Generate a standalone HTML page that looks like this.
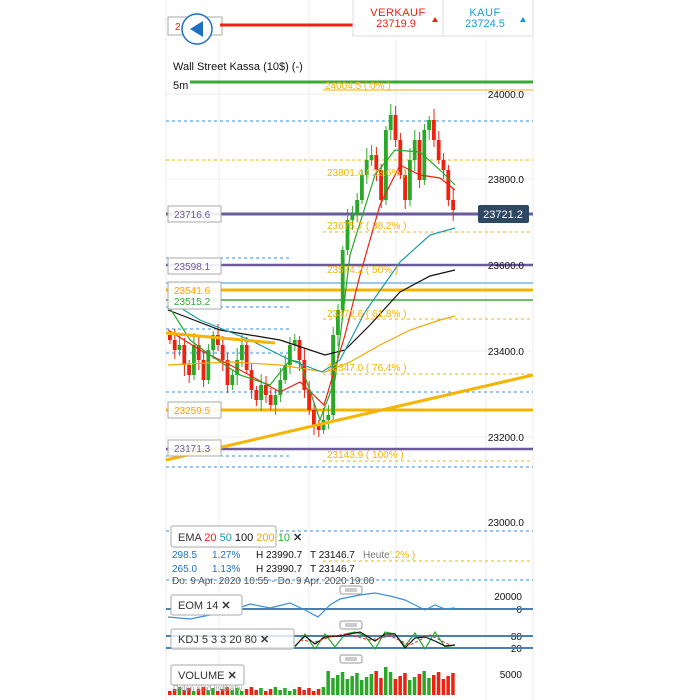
<!DOCTYPE html>
<html><head><meta charset="utf-8"><style>
body{margin:0;width:700px;height:700px;background:#fff;overflow:hidden;font-family:"Liberation Sans",sans-serif}
svg{position:absolute;left:0;top:0}
</style></head><body>
<svg id="s" width="700" height="700" viewBox="0 0 700 700" font-family="Liberation Sans, sans-serif">
<g stroke="#ececec" stroke-width="1">
<line x1="166" y1="0" x2="166" y2="700"/><line x1="533" y1="0" x2="533" y2="700"/>
<line x1="219" y1="40" x2="219" y2="700"/><line x1="309" y1="0" x2="309" y2="700"/><line x1="396" y1="40" x2="396" y2="700"/><line x1="486" y1="40" x2="486" y2="700"/>
<line x1="166" y1="94" x2="533" y2="94"/><line x1="166" y1="179" x2="533" y2="179"/><line x1="166" y1="351" x2="533" y2="351"/><line x1="166" y1="437" x2="533" y2="437"/>
</g>
<g stroke="#3a8fd8" stroke-width="1" stroke-dasharray="3,3">
<line x1="166" y1="121" x2="533" y2="121"/><line x1="166" y1="467" x2="533" y2="467"/>
<line x1="166" y1="258" x2="290" y2="258"/><line x1="166" y1="307" x2="290" y2="307"/><line x1="166" y1="329" x2="290" y2="329"/><line x1="166" y1="353" x2="290" y2="353"/><line x1="166" y1="392" x2="533" y2="392"/><line x1="166" y1="456" x2="290" y2="456"/>
<line x1="166" y1="531" x2="533" y2="531"/><line x1="166" y1="580" x2="533" y2="580"/>
</g>
<g stroke="#f5b400" stroke-width="1" stroke-dasharray="3,3">
<line x1="166" y1="160" x2="533" y2="160"/><line x1="323" y1="232" x2="533" y2="232"/><line x1="323" y1="319" x2="533" y2="319"/><line x1="323" y1="374" x2="533" y2="374"/><line x1="323" y1="461" x2="533" y2="461"/><line x1="323" y1="561" x2="533" y2="561"/>
</g>
<line x1="323" y1="90" x2="533" y2="90" stroke="#f7c860" stroke-width="1.5"/>
<line x1="190" y1="82" x2="533" y2="82" stroke="#3aa93a" stroke-width="3"/>
<line x1="166" y1="214" x2="533" y2="214" stroke="#6c5a9e" stroke-width="3"/>
<line x1="166" y1="265" x2="533" y2="265" stroke="#6c5a9e" stroke-width="2.5"/>
<line x1="166" y1="449" x2="533" y2="449" stroke="#6c5a9e" stroke-width="2.5"/>
<line x1="166" y1="283" x2="533" y2="283" stroke="#9cc8ec" stroke-width="2"/>
<line x1="166" y1="290" x2="533" y2="290" stroke="#f5b400" stroke-width="3"/>
<line x1="166" y1="300" x2="533" y2="300" stroke="#3aa93a" stroke-width="1.5"/>
<line x1="166" y1="410" x2="533" y2="410" stroke="#f5b400" stroke-width="3"/>
<g id="candles"></g>
<g fill="none" stroke-width="1.2">
<polyline stroke="#f5a800" points="168,365 230,362 280,365 325,372 350,362 380,345 410,330 440,320 455,316"/>
<polyline stroke="#111" points="168,310 220,330 280,340 325,355 345,350 370,325 400,292 430,276 455,270"/>
<polyline stroke="#1a9aa8" points="168,300 200,320 250,340 290,360 322,372 340,360 365,312 400,262 430,235 455,228"/>
<polyline stroke="#e21" points="168,330 200,350 240,370 280,392 300,382 324,405 345,335 360,275 380,205 400,165 420,175 440,178 455,190"/>
<polyline stroke="#2aa82a" points="168,305 190,340 210,355 240,375 270,385 290,360 300,362 320,420 335,380 350,255 375,175 395,150 420,152 440,170 455,185"/>
</g>
<line x1="166" y1="460" x2="533" y2="375" stroke="#f5b400" stroke-width="3"/>
<line x1="166" y1="333" x2="275" y2="343" stroke="#f5b400" stroke-width="3"/>
<g font-size="10" fill="#f5b400">
<text x="325" y="89">24004.5 ( 0% )</text><text x="327" y="176">23801.4 ( 23.6% )</text><text x="327" y="229">23675.7 ( 38.2% )</text><text x="327" y="273">23574.2 ( 50% )</text><text x="327" y="317">23472.6 ( 61.8% )</text><text x="327" y="371">23347.0 ( 76.4% )</text><text x="327" y="458">23143.9 ( 100% )</text>
</g>
<g font-size="10" fill="#111" text-anchor="end">
<text x="524" y="98">24000.0</text><text x="524" y="183">23800.0</text><text x="524" y="269">23600.0</text><text x="524" y="355">23400.0</text><text x="524" y="441">23200.0</text><text x="524" y="526">23000.0</text>
<text x="522" y="600">20000</text><text x="522" y="613">0</text><text x="522" y="640">80</text><text x="522" y="652">20</text><text x="522" y="678">5000</text>
</g>
<rect x="478" y="205" width="51" height="18" rx="2" fill="#2e4763"/>
<text x="503" y="218" font-size="11" fill="#fff" text-anchor="middle">23721.2</text>
<g stroke="#aaa" fill="#fff" fill-opacity="0.9">
<rect x="168" y="206" width="53" height="16"/><rect x="168" y="258" width="53" height="16"/><rect x="168" y="282" width="53" height="27"/><rect x="168" y="402" width="53" height="16"/><rect x="168" y="440" width="53" height="16"/>
</g>
<g font-size="10">
<text x="174" y="218" fill="#6c5a9e">23716.6</text><text x="174" y="270" fill="#6c5a9e">23598.1</text><text x="174" y="294" fill="#f5a800">23541.6</text><text x="174" y="305" fill="#3aa93a">23515.2</text><text x="174" y="414" fill="#f5a800">23259.5</text><text x="174" y="452" fill="#6c5a9e">23171.3</text>
</g>
<!-- top -->
<rect x="168" y="17" width="54" height="18" fill="#fff" stroke="#aaa"/>
<text x="175" y="30" font-size="10" fill="#e21">2</text>
<line x1="220" y1="25" x2="355" y2="25" stroke="#e21" stroke-width="3"/>
<circle cx="197" cy="29" r="15" fill="#fff" stroke="#1f6fc5" stroke-width="1.5"/>
<polygon points="190,29 203,21 203,37" fill="#1f6fc5"/>
<rect x="353" y="-1" width="180" height="37" fill="#fff" stroke="#ddd"/>
<line x1="443" y1="0" x2="443" y2="36" stroke="#ddd"/>
<text x="398" y="16" font-size="11" fill="#e21" text-anchor="middle" letter-spacing="0.5">VERKAUF</text>
<text x="396" y="27" font-size="11" fill="#e21" text-anchor="middle">23719.9</text>
<polygon points="432,22 435,17 438,22" fill="#e21"/>
<text x="485" y="16" font-size="11" fill="#1a9ad8" text-anchor="middle" letter-spacing="0.5">KAUF</text>
<text x="485" y="27" font-size="11" fill="#1a9ad8" text-anchor="middle">23724.5</text>
<polygon points="520,22 523,17 526,22" fill="#1a9ad8"/>
<text x="173" y="70" font-size="11" fill="#111">Wall Street Kassa (10$) (-)</text>
<text x="173" y="89" font-size="11" fill="#111">5m</text>
<!-- indicators -->
<rect x="171" y="526" width="105" height="21" rx="2" fill="#fff" stroke="#aaa"/>
<text x="178" y="541" font-size="11"><tspan fill="#333">EMA </tspan><tspan fill="#e21">20 </tspan><tspan fill="#1a9aa8">50 </tspan><tspan fill="#111">100 </tspan><tspan fill="#f5a800">200 </tspan><tspan fill="#2aa82a">10 </tspan><tspan fill="#333" font-weight="bold">✕</tspan></text>
<g font-size="10">
<text x="172" y="558" fill="#1f6fc5">298.5</text><text x="212" y="558" fill="#1f6fc5">1.27%</text><text x="256" y="558" fill="#111">H 23990.7</text><text x="310" y="558" fill="#111">T 23146.7</text><text x="363" y="558" fill="#777">Heute</text><text x="390" y="558" fill="#f5b400">'.2% )</text>
<text x="172" y="572" fill="#1f6fc5">265.0</text><text x="212" y="572" fill="#1f6fc5">1.13%</text><text x="256" y="572" fill="#111">H 23990.7</text><text x="310" y="572" fill="#111">T 23146.7</text>
<text x="172" y="584" fill="#555">Do. 9 Apr. 2020 10:55 - Do. 9 Apr. 2020 19:00</text>
</g>
<g fill="#fff" stroke="#999"><rect x="340" y="586" width="22" height="8" rx="2"/><rect x="340" y="621" width="22" height="8" rx="2"/><rect x="340" y="655" width="22" height="8" rx="2"/></g>
<g stroke="#999"><line x1="345" y1="589" x2="357" y2="589"/><line x1="345" y1="591" x2="357" y2="591"/><line x1="345" y1="624" x2="357" y2="624"/><line x1="345" y1="626" x2="357" y2="626"/><line x1="345" y1="658" x2="357" y2="658"/><line x1="345" y1="660" x2="357" y2="660"/></g>
<line x1="166" y1="609" x2="533" y2="609" stroke="#4a7fb0" stroke-width="2"/>
<polyline fill="none" stroke="#3a8fd8" stroke-width="1.2" points="168,617 190,619 210,615 230,611 250,604 270,608 290,603 305,610 318,617 330,605 340,599 360,595 375,593 390,596 405,600 415,605 425,610 435,605 445,609 455,608"/>
<line x1="166" y1="636" x2="533" y2="636" stroke="#4a7fb0" stroke-width="2"/>
<line x1="166" y1="648" x2="533" y2="648" stroke="#4a7fb0" stroke-width="2"/>
<polyline fill="none" stroke="#2aa82a" stroke-width="1.2" points="295,647 305,634 315,649 325,634 335,647 345,634 355,632 365,636 375,649 385,632 395,634 405,646 415,633 425,649 435,632 445,647 455,645"/>
<polyline fill="none" stroke="#111" stroke-width="1.2" points="295,646 305,636 315,644 325,637 340,636 360,632 375,641 385,634 395,634 405,648 415,638 425,637 435,641 445,646 455,645"/>
<polyline fill="none" stroke="#e21" stroke-width="1" stroke-dasharray="3,2" points="300,640 315,642 330,637 345,634 370,640 390,636 410,645 430,635 450,645"/>
<rect x="171" y="595" width="71" height="20" rx="2" fill="#fff" stroke="#aaa"/>
<text x="178" y="609" font-size="11" fill="#333">EOM  14 <tspan font-weight="bold">✕</tspan></text>
<rect x="171" y="629" width="123" height="20" rx="2" fill="#fff" fill-opacity="0.8" stroke="#aaa"/>
<text x="178" y="643" font-size="11" fill="#333">KDJ  5  3  3  20  80 <tspan font-weight="bold">✕</tspan></text>
<g id="vol"></g>
<rect x="171" y="665" width="73" height="20" rx="2" fill="#fff" stroke="#aaa"/>
<text x="178" y="679" font-size="11" fill="#333">VOLUME <tspan font-weight="bold">✕</tspan></text>
<text x="173" y="691" font-size="8" fill="#999">Daten sind indikativ</text>
</svg>
<script>
var c=[340,350,345,365,375,345,360,380,350,335,345,360,385,375,360,345,370,390,400,385,395,405,395,380,365,345,340,360,390,410,425,430,420,415,335,310,250,220,215,200,175,160,155,170,200,130,115,140,175,200,160,140,180,130,120,140,160,170,200,210];
var g=document.getElementById('candles'),v=document.getElementById('vol'),h='',vh='',ns='http://www.w3.org/2000/svg';
var prev=335;
for(var i=0;i<c.length;i++){var x=168+i*4.8,o=prev,cl=c[i];var up=cl<o;if(Math.abs(cl-o)<4){o=cl+((i%2)?6:-6);up=cl<o;}
var col=up?'#2aa82a':'#e21';var t=Math.min(o,cl),b=Math.max(o,cl);var w1=t-4-(i*7%9),w2=b+4+(i*5%8);
h+='<line x1="'+(x+2)+'" y1="'+w1+'" x2="'+(x+2)+'" y2="'+w2+'" stroke="'+col+'" stroke-width="1"/><rect x="'+x+'" y="'+t+'" width="3.8" height="'+(b-t)+'" fill="'+col+'"/>';
var vv=(i>=33&&i<60)?15+(i*13%10):4+(i*7%5);if(i==45)vv=28;
vh+='<rect x="'+x+'" y="'+(695-vv)+'" width="3.5" height="'+vv+'" fill="'+col+'"/>';prev=cl;}
g.innerHTML=h;v.innerHTML=vh;
</script>
</body></html>
